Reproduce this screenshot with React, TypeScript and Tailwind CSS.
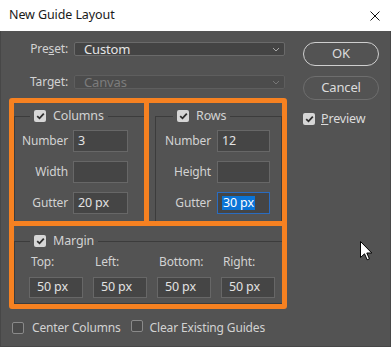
import React from "react";

const font = { fontFamily: '"Noto Sans", "Open Sans", sans-serif' };

function Check({ checked = true }: { checked?: boolean }) {
  if (!checked)
    return <span className="inline-block w-[12px] h-[12px] rounded-[2px] border border-[#8a8a8a] bg-[#4a4a4a]" />;
  return (
    <span className="inline-flex items-center justify-center w-[12px] h-[12px] rounded-[2px] bg-[#d6d6d6]">
      <svg width="9" height="8" viewBox="0 0 9 8">
        <path d="M1.2 4.2 L3.5 6.3 L7.8 1.6" fill="none" stroke="#2e2e2e" strokeWidth="1.8" />
      </svg>
    </span>
  );
}

function Input({ value = "", w = "w-[55px]", selected = false }: { value?: string; w?: string; selected?: boolean }) {
  return (
    <div
      className={`${w} h-[22px] flex items-center pl-[4px] text-[12.5px] ${
        selected ? "border border-[#2a6cc0] bg-[#454545]" : "border border-[#676767] bg-[#454545]"
      } text-[#e2e2e2]`}
    >
      {selected ? <span className="bg-[#0a74d6] text-white px-[1px] leading-[14px]">{value}</span> : value}
    </div>
  );
}

function Chevron({ color }: { color: string }) {
  return (
    <svg width="8" height="5" viewBox="0 0 8 5">
      <path d="M1 1 L4 4 L7 1" fill="none" stroke={color} strokeWidth="1" />
    </svg>
  );
}

export default function App() {
  return (
    <div className="relative w-[391px] h-[347px] bg-[#535353] overflow-hidden select-none" style={font}>
      {/* Title bar */}
      <div className="h-[31px] bg-white flex items-center justify-between pl-[9px] pr-[11px]">
        <span className="text-[12.5px] tracking-[-0.1px] text-[#1a1a1a]">New Guide Layout</span>
        <svg width="10" height="10" viewBox="0 0 10 10">
          <path d="M0.5 0.5 L9.5 9.5 M9.5 0.5 L0.5 9.5" stroke="#111" strokeWidth="1" />
        </svg>
      </div>

      <div className="flex h-[316px] border-x border-b border-[#474747]">
        {/* Left column */}
        <div className="w-[301px] flex flex-col text-[12px] tracking-[-0.15px] text-[#d2d2d2]">
          <div className="flex items-center h-[14px] mt-[11px]">
            <span className="w-[68px] -ml-[1px] text-right leading-[14px]">
              Pre<span className="underline">s</span>et:
            </span>
            <div className="ml-[6px] w-[211px] h-[14px] rounded-[2px] border border-[#6a6a6a] bg-[#444444] flex items-center justify-between pl-[9px] pr-[4px]">
              <span className="leading-[12px] text-[13px] text-[#e4e4e4]">Custom</span>
              <Chevron color="#a8a8a8" />
            </div>
          </div>
          <div className="flex items-center h-[14px] mt-[19px]">
            <span className="w-[68px] -ml-[1px] text-right leading-[14px]">Target:</span>
            <div className="ml-[6px] w-[211px] h-[14px] rounded-[2px] border border-[#5e5e5e] bg-[#4c4c4c] flex items-center justify-between pl-[9px] pr-[4px]">
              <span className="leading-[12px] text-[13px] text-[#7c7c7c]">Canvas</span>
              <Chevron color="#777777" />
            </div>
          </div>

          {/* Columns / Rows */}
          <div className="flex mt-[19px] ml-[13px]">
            <fieldset className="w-[131px] border border-[#3c3c3c] pb-[7px]">
              <legend className="ml-[15px] px-[4px] h-[16px] flex items-center gap-[7px]">
                <Check />
                <span className="leading-[16px] text-[12.5px]">Columns</span>
              </legend>
              <div className="flex flex-col gap-[9px] pt-[6px]">
                {[
                  ["Number", "3"],
                  ["Width", ""],
                  ["Gutter", "20 px"],
                ].map(([l, v]) => (
                  <div key={l} className="flex items-center">
                    <span className="w-[53px] text-right">{l}</span>
                    <span className="ml-[5px]">
                      <Input value={v} />
                    </span>
                  </div>
                ))}
              </div>
            </fieldset>
            <fieldset className="ml-[10px] w-[127px] border border-[#3c3c3c] pb-[7px]">
              <legend className="ml-[17px] px-[4px] h-[16px] flex items-center gap-[7px]">
                <Check />
                <span className="leading-[16px] text-[12.5px]">Rows</span>
              </legend>
              <div className="flex flex-col gap-[9px] pt-[6px]">
                {[
                  ["Number", "12", false],
                  ["Height", "", false],
                  ["Gutter", "30 px", true],
                ].map(([l, v, s]) => (
                  <div key={l as string} className="flex items-center">
                    <span className="w-[55px] text-right">{l as string}</span>
                    <span className="ml-[6px]">
                      <Input value={v as string} w="w-[53px]" selected={s as boolean} />
                    </span>
                  </div>
                ))}
              </div>
            </fieldset>
          </div>

          {/* Margin */}
          <fieldset className="mt-[11px] ml-[13px] w-[269px] border border-[#3c3c3c] pb-[5px]">
            <legend className="ml-[15px] px-[4px] h-[16px] flex items-center gap-[7px]">
              <Check />
              <span className="leading-[16px] text-[12.5px]">Margin</span>
            </legend>
            <div className="flex gap-[10px] pl-[14px] pt-[5px]">
              {["Top:", "Left:", "Bottom:", "Right:"].map((l) => (
                <div key={l} className="flex flex-col">
                  <span className="pl-[2px] leading-[16px]">{l}</span>
                  <div className="mt-[7px]">
                    <div className="w-[54px] h-[21px] flex items-center pl-[7px] text-[12.5px] border border-[#676767] bg-[#454545] text-[#e2e2e2]">
                      50 px
                    </div>
                  </div>
                </div>
              ))}
            </div>
          </fieldset>

          <div className="flex items-center h-[16px] mt-[16px] ml-[11px]">
            <Check checked={false} />
            <span className="ml-[8px]">Center Columns</span>
            <span className="ml-[10px]">
              <Check checked={false} />
            </span>
            <span className="ml-[7px]">Clear Existing Guides</span>
          </div>
        </div>

        {/* Right column */}
        <div className="flex flex-col ml-[1px] mt-[11px] text-[12px] tracking-[-0.15px] text-[#dcdcdc]">
          <div className="w-[76px] h-[24px] rounded-full border border-[#cfcfcf] flex items-center justify-center text-[13px]">
            OK
          </div>
          <div className="w-[76px] h-[24px] mt-[10px] rounded-full border border-[#6e6e6e] flex items-center justify-center text-[13px]">
            Cancel
          </div>
          <div className="flex items-center mt-[11px] h-[16px]">
            <Check />
            <span className="ml-[6px] text-[12.5px]">
              <span className="underline">P</span>review
            </span>
          </div>
        </div>
      </div>

      {/* Orange annotation boxes */}
      <div className="absolute left-[9px] top-[98px] w-[140px] h-[128px] border-[5px] border-[#f68121] rounded-[3px] pointer-events-none" />
      <div className="absolute left-[144px] top-[98px] w-[143px] h-[128px] border-[5px] border-[#f68121] rounded-[3px] pointer-events-none" />
      <div className="absolute left-[9px] top-[221px] w-[278px] h-[88px] border-[5px] border-[#f68121] rounded-[3px] pointer-events-none" />

      {/* Mouse cursor */}
      <svg className="absolute left-[360px] top-[241px]" width="13" height="20" viewBox="0 0 13 20">
        <path d="M0.5 0.5 L0.5 16.5 L4.5 12.8 L7.2 18.8 L9.4 17.8 L6.8 12 L11.8 12 Z" fill="#fff" stroke="#000" strokeWidth="1" />
      </svg>
    </div>
  );
}
